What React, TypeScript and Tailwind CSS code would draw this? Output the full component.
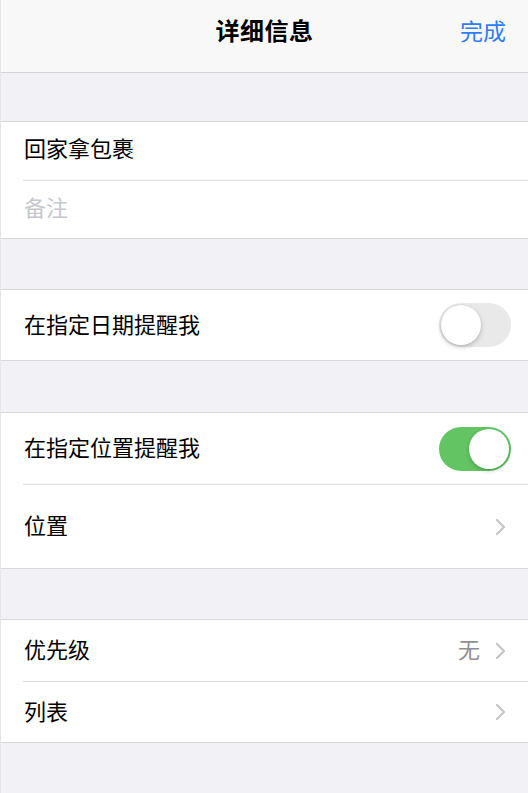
import React from "react";

const font = { fontFamily: '"Noto Sans CJK SC", "Noto Sans", sans-serif' };

function Chevron() {
  return (
    <svg width="11" height="18" viewBox="0 0 11 18" fill="none">
      <path d="M2 2l7 7-7 7" stroke="#c4c4c8" strokeWidth="2.2" strokeLinecap="round" strokeLinejoin="round" />
    </svg>
  );
}

function Toggle({ on }: { on: boolean }) {
  return on ? (
    <div className="w-[72px] h-[44px] rounded-full bg-[#62c462] flex items-center justify-end pr-[2px]">
      <div className="w-[40px] h-[40px] rounded-full bg-white shadow-[0_2px_4px_rgba(0,0,0,0.2)]" />
    </div>
  ) : (
    <div className="w-[72px] h-[44px] rounded-full bg-[#e9e9ea] flex items-center pl-[2px]">
      <div className="w-[40px] h-[40px] rounded-full bg-white shadow-[0_2px_5px_rgba(0,0,0,0.22),0_0_0_0.5px_rgba(0,0,0,0.06)]" />
    </div>
  );
}

function Sep() {
  return <div className="h-px bg-[#dcdcde] ml-[22px]" />;
}

export default function App() {
  return (
    <div className="min-h-[793px] bg-[#f1f1f6] border-l border-[#e6e6e9] text-black" style={font}>
      <div className="h-[73px] bg-[#f8f8f8] border-b border-[#d4d4d7] flex items-center justify-between pb-[12px] pl-[190px] pr-[22px]">
        <span className="flex-1 text-center text-[24px] font-semibold leading-none tracking-[0.5px]">详细信息</span>
        <span className="w-[168px] text-right text-[23px] leading-none text-[#2f7cf6]">完成</span>
      </div>
      <div className="h-[48px]" />
      <div className="bg-white border-y border-[#d8d8db]">
        <div className="h-[58px] flex items-center pl-[23px] pb-[8px] text-[22px] leading-none">回家拿包裹</div>
        <Sep />
        <div className="h-[57px] flex items-center pl-[23px] pb-[8px] text-[22px] leading-none text-[#c7c7cc]">备注</div>
      </div>
      <div className="h-[50px]" />
      <div className="bg-white border-y border-[#d8d8db]">
        <div className="h-[70px] flex items-center justify-between pl-[23px] pr-[17px] text-[22px] leading-none">
          <span className="pb-[4px]">在指定日期提醒我</span>
          <Toggle on={false} />
        </div>
      </div>
      <div className="h-[51px]" />
      <div className="bg-white border-y border-[#d8d8db]">
        <div className="h-[71px] flex items-center justify-between pl-[23px] pr-[17px] text-[22px] leading-none">
          <span className="pb-[6px]">在指定位置提醒我</span>
          <Toggle on={true} />
        </div>
        <Sep />
        <div className="h-[83px] flex items-center justify-between pl-[23px] pr-[22px] text-[22px] leading-none">
          <span className="pb-[6px]">位置</span>
          <Chevron />
        </div>
      </div>
      <div className="h-[50px]" />
      <div className="bg-white border-y border-[#d8d8db]">
        <div className="h-[61px] flex items-center justify-between pl-[23px] pr-[22px] text-[22px] leading-none">
          <span className="pb-[6px]">优先级</span>
          <div className="flex items-center gap-[15px]">
            <span className="text-[#8e8e93] pb-[6px]">无</span>
            <Chevron />
          </div>
        </div>
        <Sep />
        <div className="h-[60px] flex items-center justify-between pl-[23px] pr-[22px] text-[22px] leading-none">
          <span className="pb-[4px]">列表</span>
          <Chevron />
        </div>
      </div>
    </div>
  );
}
